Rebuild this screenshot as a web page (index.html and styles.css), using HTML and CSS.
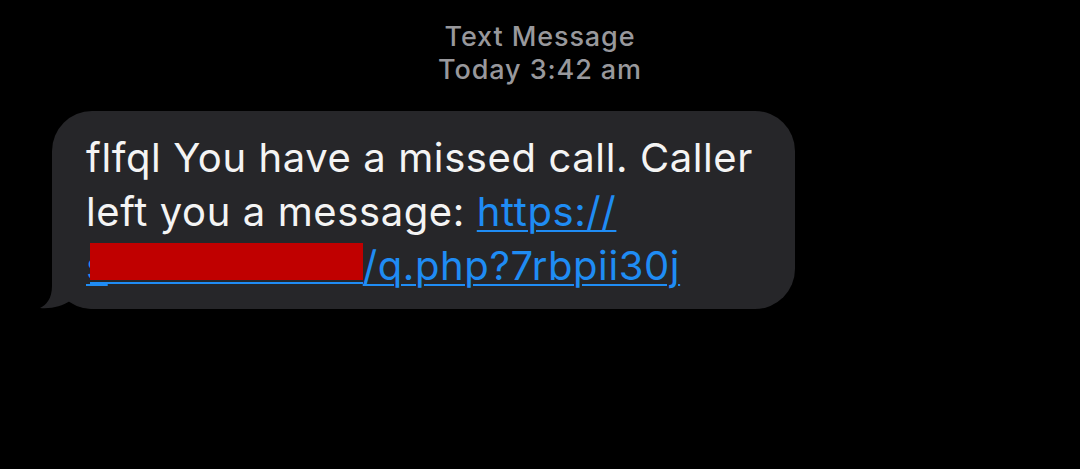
FILE: index.html
```html
<!DOCTYPE html>
<html lang="en">
<head>
    <meta charset="UTF-8">
    <meta name="viewport" content="width=device-width, initial-scale=1.0">
    <title>Text Message</title>
    <link rel="stylesheet" href="styles.css">
</head>
<body>
    <div class="thread">
        <div class="meta">
            <div class="meta-line">Text Message</div>
            <div class="meta-line">Today 3:42 am</div>
        </div>

        <div class="row">
            <div class="bubble">
                <p class="msg">flfql You have a missed call. Caller<br>left you a message: <a href="#" class="link">https://</a><br><a href="#" class="link">s</a><span class="redact"></span><a href="#" class="link">/q.php?7rbpii30j</a></p>
                <svg class="tail" width="60" height="50" viewBox="0 0 60 50">
                    <path d="M14 0 L14 27 C14 40 8 46 2 49 C14 50 24 47 32 42 C40 48 48 50 60 50 L60 0 Z" fill="#262629"/>
                </svg>
            </div>
        </div>
    </div>
</body>
</html>
```

FILE: styles.css
```css
body{
    margin: 0;
    background-color: #000;
    font-family: Inter, "Noto Sans", sans-serif;
}

.thread{
    width: 1080px;
    height: 469px;
    padding-top: 20px;
    box-sizing: border-box;
}

.meta{
    display: flex;
    flex-direction: column;
    align-items: center;
    color: #98989c;
    font-size: 27px;
    font-weight: 500;
    letter-spacing: 0.9px;
    line-height: 33px;
}

.row{
    display: flex;
    padding-left: 52px;
    margin-top: 25px;
}

.bubble{
    position: relative;
    background-color: #262629;
    border-radius: 40px;
    padding: 20px 40px 16px 34px;
    width: 743px;
    box-sizing: border-box;
}

.msg{
    margin: 0;
    color: #f4f4f4;
    font-size: 40px;
    letter-spacing: 0.6px;
    line-height: 54px;
    position: relative;
    z-index: 1;
}

.link{
    color: #1f8cf4;
    text-decoration: underline;
    text-decoration-thickness: 2px;
    text-underline-offset: 4px;
}

.redact{
    display: inline-block;
    width: 273px;
    height: 41px;
    margin-left: -18px;
    vertical-align: -4px;
    background: linear-gradient(#c00000 0 37px, transparent 37px 39px, #1f8cf4 39px 41px);
}

.tail{
    position: absolute;
    left: -14px;
    bottom: 0;
}
```
